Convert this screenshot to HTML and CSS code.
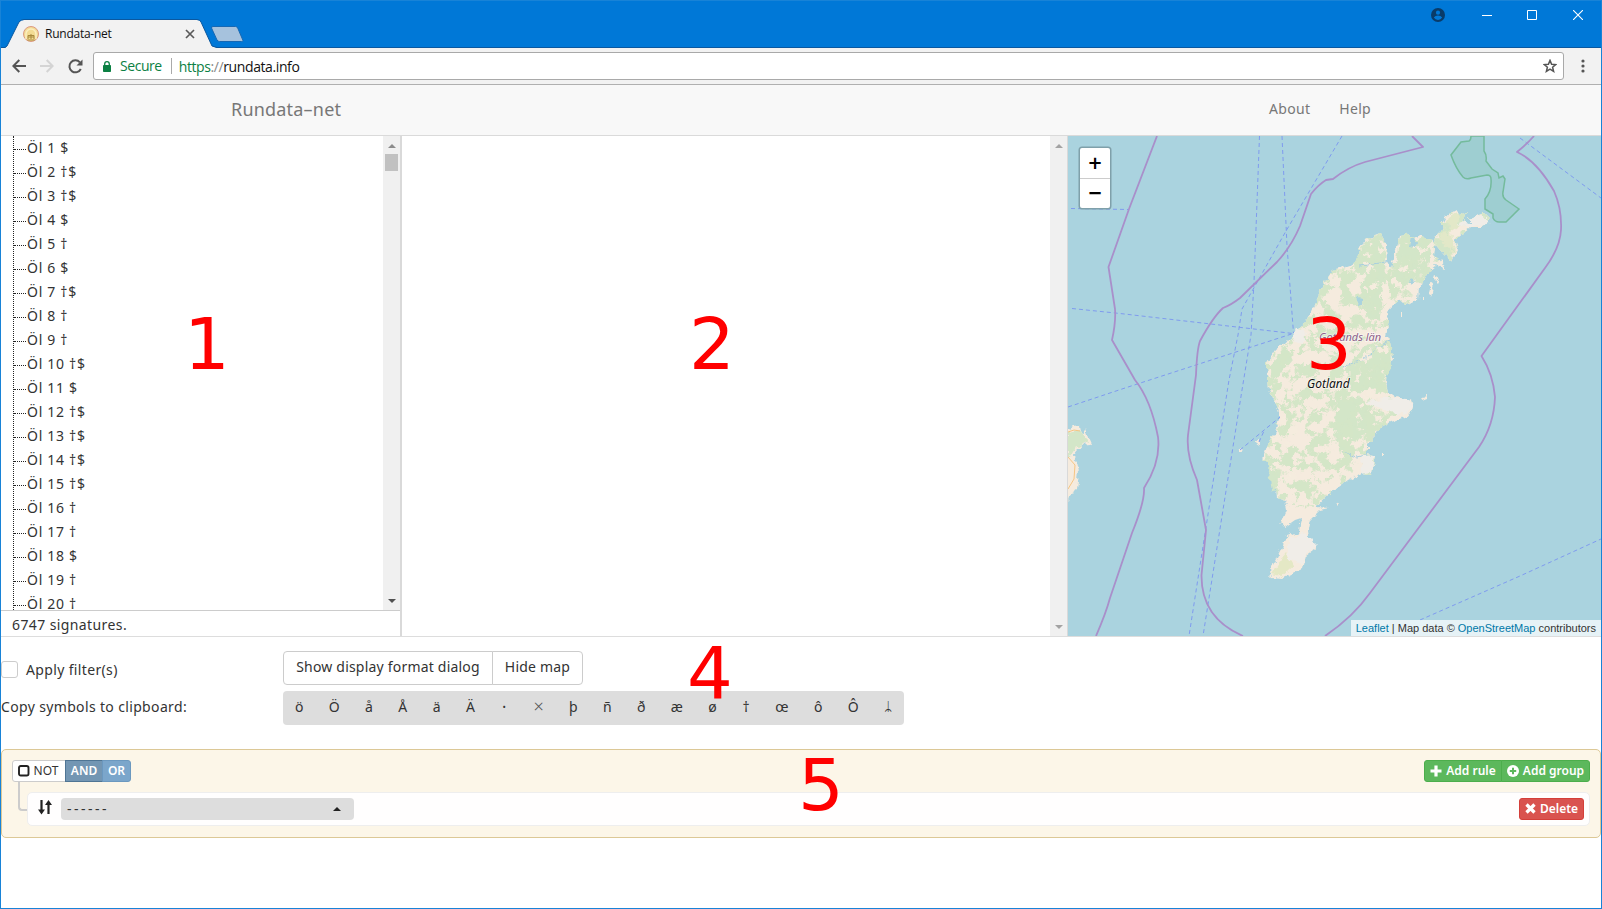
FILE: index.html
```html
<!DOCTYPE html>
<html lang="en">
<head>
<meta charset="utf-8">
<title>Rundata-net</title>
<link rel="stylesheet" href="styles.css">
</head>
<body>
<div class="window">
  <header class="titlebar">
    <div class="tab">
      <svg class="tab-shape" width="212" height="29" viewBox="0 0 212 29"><path d="M0 29 L2 27 L14 3 Q16 1 19 1 H192 Q195 1 196 3 L207 27 L212 29Z" fill="#f2f2f2"/><path d="M0 28.500 L2 27 L14 3 Q16 .5 19 .5 H192 Q195 .5 196 3 L207 27 L212 28.500" fill="none" stroke="#0a58a0" stroke-width="1"/></svg>
      <svg class="favicon" width="16" height="16" viewBox="0 0 16 16"><circle cx="8" cy="8" r="7.500" fill="#f3dc94" stroke="#dc9a82"/><path d="M3 13V8a5 5 0 0 1 10 0v5" fill="none" stroke="#fbeec0" stroke-width="1.500"/><path d="M5 13V9.500h6V13M5 11h6M8 8v5M4.500 14h7" fill="none" stroke="#a8893c"/></svg>
      <span class="tab-title">Rundata-net</span>
      <svg class="tab-close" width="10" height="10" viewBox="0 0 10 10"><path d="M1 1l8 8M9 1l-8 8" stroke="#5a5a5a" stroke-width="1.700"/></svg>
    </div>
    <svg class="newtab" width="34" height="17" viewBox="0 0 34 17"><path d="M3 .5H25.500Q27 .5 27.700 2L33 14.500Q33 15.500 31.500 15.500H9.500Q8 15.500 7 14L1.500 2Q1.300 .5 3 .5Z" fill="#a6c2dd" stroke="#1768b3"/></svg>
    <div class="winbuttons">
      <svg width="14" height="14" viewBox="0 0 14 14"><circle cx="7" cy="7" r="7" fill="#093b69"/><circle cx="7" cy="4.700" r="2.100" fill="#0078d7"/><path d="M2.800 9.600q1.500-2 4.200-2t4.200 2q-1.500 2.400-4.200 2.400t-4.200-2.400z" fill="#0078d7"/></svg>
      <svg width="10" height="10" viewBox="0 0 10 10"><path d="M0 5.500h10" stroke="#fff"/></svg>
      <svg width="10" height="10" viewBox="0 0 10 10"><path d="M.5.5h9v9h-9z" fill="none" stroke="#fff"/></svg>
      <svg width="10" height="10" viewBox="0 0 10 10"><path d="M0 0l10 10M10 0L0 10" stroke="#fff" stroke-width="1.100"/></svg>
    </div>
  </header>

  <div class="toolbar">
    <svg width="14" height="14" viewBox="0 0 14 14"><path d="M14 7H1.500M7.300 1L1.300 7l6 6" fill="none" stroke="#555" stroke-width="2"/></svg>
    <svg width="14" height="14" viewBox="0 0 14 14"><path d="M0 7h12.500M6.700 1l6 6-6 6" fill="none" stroke="#d4d4d4" stroke-width="2"/></svg>
    <svg width="15" height="15" viewBox="0 0 15 15"><path d="M12.800 10A6 6 0 1 1 11.900 3.300" fill="none" stroke="#555" stroke-width="2"/><path d="M14.500 .5v6h-6z" fill="#555"/></svg>
    <div class="omnibox">
      <svg width="8" height="11" viewBox="0 0 8 11"><rect y="4" width="8" height="7" rx=".8" fill="#0b8043"/><path d="M1.700 5V3a2.300 2.300 0 0 1 4.600 0v2" fill="none" stroke="#0b8043" stroke-width="1.300"/></svg>
      <span class="secure">Secure</span>
      <span class="url"><span class="scheme">https</span><span class="slashes">://</span>rundata.info</span>
      <svg class="star" width="14" height="14" viewBox="0 0 14 14"><path d="M7 1.400l1.600 3.900 4.200.3-3.200 2.700 1 4.100L7 10.200l-3.600 2.200 1-4.100L1.200 5.600l4.200-.3z" fill="none" stroke="#555" stroke-width="1.500"/></svg>
    </div>
    <svg class="dots" width="4" height="14" viewBox="0 0 4 14"><g fill="#555"><circle cx="2" cy="2" r="1.600"/><circle cx="2" cy="7" r="1.600"/><circle cx="2" cy="12" r="1.600"/></g></svg>
  </div>

  <nav class="navbar">
    <a class="brand">Rundata–net</a>
    <a class="nav-link">About</a>
    <a class="nav-link">Help</a>
  </nav>

  <main class="panels">
    <section class="signatures">
      <div class="tree-area">
        <ul class="tree">
          <li>Öl 1 $</li><li>Öl 2 †$</li><li>Öl 3 †$</li><li>Öl 4 $</li><li>Öl 5 †</li>
          <li>Öl 6 $</li><li>Öl 7 †$</li><li>Öl 8 †</li><li>Öl 9 †</li><li>Öl 10 †$</li>
          <li>Öl 11 $</li><li>Öl 12 †$</li><li>Öl 13 †$</li><li>Öl 14 †$</li><li>Öl 15 †$</li>
          <li>Öl 16 †</li><li>Öl 17 †</li><li>Öl 18 $</li><li>Öl 19 †</li><li>Öl 20 †</li>
        </ul>
        <div class="scrollbar">
          <svg width="8" height="4" viewBox="0 0 8 4"><path d="M0 4L4 0l4 4z" fill="#8b8b8b"/></svg>
          <div class="thumb"></div>
          <svg class="down" width="8" height="4" viewBox="0 0 8 4"><path d="M0 0h8L4 4z" fill="#505050"/></svg>
        </div>
      </div>
      <div class="count">6747 signatures.</div>
    </section>
    <section class="details">
      <div class="scrollbar">
        <svg width="8" height="4" viewBox="0 0 8 4"><path d="M0 4L4 0l4 4z" fill="#a3a3a3"/></svg>
        <svg class="down" width="8" height="4" viewBox="0 0 8 4"><path d="M0 0h8L4 4z" fill="#a3a3a3"/></svg>
      </div>
    </section>
    <section class="map">
      <svg class="map-art" width="533" height="500" viewBox="1068 136 533 500">
        <defs>
          <filter id="coast" x="-5%" y="-5%" width="110%" height="110%" color-interpolation-filters="sRGB">
            <feTurbulence type="fractalNoise" baseFrequency=".16" numOctaves="3" seed="4" result="n"/>
            <feDisplacementMap in="SourceGraphic" in2="n" scale="7" xChannelSelector="R" yChannelSelector="G"/>
          </filter>
          <filter id="woods" filterUnits="userSpaceOnUse" x="1068" y="136" width="533" height="500" color-interpolation-filters="sRGB">
            <feTurbulence type="fractalNoise" baseFrequency=".085" numOctaves="4" seed="11"/>
            <feColorMatrix values="0 0 0 0 .83  0 0 0 0 .9  0 0 0 0 .78  14 0 0 0 -6.900" result="g"/>
            <feComposite in="g" in2="SourceGraphic" operator="in"/>
          </filter>
          <filter id="fields" filterUnits="userSpaceOnUse" x="1068" y="136" width="533" height="500" color-interpolation-filters="sRGB">
            <feTurbulence type="fractalNoise" baseFrequency=".11" numOctaves="3" seed="29"/>
            <feColorMatrix values="0 0 0 0 .96  0 0 0 0 .925  0 0 0 0 .87  14 0 0 0 -8.300" result="g"/>
            <feComposite in="g" in2="SourceGraphic" operator="in"/>
          </filter>
        </defs>
        <rect x="1068" y="136" width="533" height="500" fill="#aad3df"/>
        <g filter="url(#coast)">
          <g fill="#f5ebde">
            <path d="M1491 220L1484 213 1470 218 1463 220 1468 211 1459 216 1457 210 1446 216 1442 224 1443 230 1436 236 1433 244 1430 240 1420 236 1412 238 1410 234 1400 236 1398 244 1394 258 1391 268 1387 262 1386 245 1380 234 1367 239 1360 248 1358 262 1343 267 1332 270 1325 280 1318 296 1308 318 1296 333 1287 341 1275 350 1266 364 1268 390 1274 402 1279 415 1277 430 1268 444 1263 459 1272 465 1274 478 1276 498 1285 500 1287 510 1281 525 1285 527 1295 520 1301 518 1299 532 1285 538 1282 548 1269 574 1272 577 1282 578 1303 568 1306 556 1318 547 1310 542 1308 530 1310 520 1320 510 1329 508 1316 507 1325 497 1335 490 1348 480 1363 473 1371 475 1375 457 1368 455 1368 443 1376 435 1380 428 1392 422 1407 417 1414 408 1411 400 1395 397 1388 392 1386 382 1387 370 1393 358 1390 342 1386 335 1389 320 1387 312 1393 305 1398 300 1409 305 1418 300 1419 288 1430 270 1436 265 1445 270 1443 262 1434 255 1436 244 1444 254 1452 261 1458 248 1455 240 1470 228 1480 228Z"/>
            <path d="M1062 433l11-7 7-1 1 6 3 5 1-8 2 7 4 9-9 1-8 10 2 8 2 9-2 18-6 4-3 10-6 4z"/>
            <path d="M1239 450l3-1 1 4h-4zM1256 441l3-1 1 4-3 1zM1434 275l5 3-2 4-4-4zM1431 284l3 1-3 12-2-5zM1422 297h2v3h-2zM1421 397l6-1v3l-5 2zM1382 453h3v2h-3zM1336 504l3-2-1 4zM1401 312h2v3h-2z"/>
          </g>
          <g fill="#d3e6c8">
            <path d="M1366 242l13-6 6 18 1 28-7 40-12-5-8-35-6-18zM1400 240l21 0 10 10-4 22-14 8-16 14-6-12 7-26zM1336 400l24-6 8 18 15 10-20 14-22 16-8-20zM1364 346l26-4 1 26-10 20-28 6-8-24zM1270 366l16-20 6 14-18 20zM1266 455l14 3-2 36-6-4zM1068 432l12 -2 8 12-12 6-8 10z"/>
            <path d="M1446 220l10-7 8 10-14 10 6 16-6 8-14-14z" fill="#e2e8c8"/>
            <path d="M1270 574l16-20 8 12-12 10z" fill="#e4e8c5"/>
          </g>
          <path d="M1491 220L1484 213 1470 218 1463 220 1468 211 1459 216 1457 210 1446 216 1442 224 1443 230 1436 236 1433 244 1430 240 1420 236 1412 238 1410 234 1400 236 1398 244 1394 258 1391 268 1387 262 1386 245 1380 234 1367 239 1360 248 1358 262 1343 267 1332 270 1325 280 1318 296 1308 318 1296 333 1287 341 1275 350 1266 364 1268 390 1274 402 1279 415 1277 430 1268 444 1263 459 1272 465 1274 478 1276 498 1285 500 1287 510 1300 506 1316 507 1325 497 1335 490 1348 480 1363 473 1371 475 1375 457 1368 455 1368 443 1376 435 1380 428 1392 422 1400 410 1388 392 1386 382 1387 370 1393 358 1390 342 1386 335 1389 320 1387 312 1393 305 1398 300 1409 305 1418 300 1419 288 1430 270 1443 262 1434 255 1436 244 1444 254 1452 261 1458 248 1455 240 1470 228Z" filter="url(#woods)"/>
          <path d="M1360 244l70 -6v30l-40 36v90l-14 30-50 30v-60l20-50z M1266 360h30v140h-30z" clip-path="url(#landclip)" filter="url(#fields)"/>
          <clipPath id="landclip"><path d="M1398 244L1394 258 1391 268 1387 262 1386 245 1380 236 1367 241 1360 262 1340 300 1340 400 1280 400 1279 415 1277 430 1268 444 1268 459 1276 490 1300 480 1368 443 1376 435 1385 405 1386 370 1390 358 1386 335 1389 320 1387 312 1393 303 1409 300 1419 288 1430 262 1425 240Z"/></clipPath>
          <path d="M1474 216l12 1 4 6-20 5-12-4zM1386 398l22 1 6 8-10 8-24-6-14-8 18-2zM1288 540l16-8 14 14-12 8-4 10-14-6zM1296 328l10 4-4 12-10-3zM1362 455l12 1-2 16-12 2z" fill="#f0ede8"/>
          <path d="M1412 238l6 4-2 6-6-2zM1410 278l6 2-3 5-5-2zM1358 298l5 1v6l-6-1zM1436 248l5 3 2 6-6-1zM1466 219l4 0 0 5-4-1z" fill="#aad3df"/>
          <path d="M1343 366l20-6 18-14 10-6M1344 452l12 5 16-3M1360 266l20-3 10-2" fill="none" stroke="#a9cfdf"/>
        </g>
        <path d="M1068 432l6-2 6 1M1068 457l7 8-1 14-6 10" fill="none" stroke="#f5c583"/>
        <path d="M1471 136q0 4-2 5l-8 1-10 13q5 14 12 22 3 3 8 1l16-3q4 0 4 4 1 12-6 20v10l8 5 0 4q2 4 6 4h7l13-13-13-9q-4-3-3-8l2-13-2-3-4 2-1-5-6-4-6-8q1-6-2-10v-15z" fill="#8cc8bb" fill-opacity=".4" stroke="#74bb9c" stroke-width="1.500"/>
        <g fill="none" stroke="#7f9bef" stroke-width="1" stroke-dasharray="4 3">
          <path d="M1259.500 136L1254 282 1251 335 1242 390 1203 636M1282 136L1287 246 1293.500 333M1342 136L1286 231 1264 270 1242 309 1238 335 1229 380 1189 636M1072 308.500L1120 313.500 1293 333.500 1125 388 1068 407M1071 208.500L1129 209.500M1520 138L1601 198M1420 620L1520 576 1601 539M1240 450L1280 417M1259 442L1264 431"/>
        </g>
        <g fill="none" stroke="#a98fca" stroke-width="1.800" stroke-linejoin="round">
          <path d="M1157 136L1129 209 1108.500 267 1115 309Q1116 322 1112 340L1135 380Q1151 400 1158 437Q1161 462 1144 488Q1145 501 1132 533L1110 598Q1106 613 1096 636"/>
          <path d="M1412 136L1423 147 1365 162Q1348 167 1333 179L1326 180Q1318 185 1311 194L1300 226Q1291 247 1277 262L1240 298Q1231 305 1223 308Q1213 317 1200 341Q1197 349 1196 375L1188 435Q1186 455 1197 480L1206 530 1201.500 575Q1201 618 1243 636"/>
          <path d="M1534 136Q1528 143 1517 152Q1537 161 1554 191Q1562 209 1561 230Q1560 248 1545 268L1481.500 356Q1493 374 1495 397Q1494 425 1479 447L1370 593Q1353 617 1325 636"/>
        </g>
        <text class="region-label" x="1319" y="341">Gotlands län</text>
        <text class="island-label" x="1307" y="388">Gotland</text>
      </svg>
      <div class="zoom"><a>+</a><a>−</a></div>
      <div class="attribution"><a>Leaflet</a> | Map data © <a>OpenStreetMap</a> contributors</div>
    </section>
  </main>

  <section class="controls">
    <label class="filter"><span class="checkbox"></span>Apply filter(s)</label>
    <div class="btn-group"><button>Show display format dialog</button><button>Hide map</button></div>
    <span class="copy-label">Copy symbols to clipboard:</span>
    <div class="symbols"><span>ö</span><span>Ö</span><span>å</span><span>Å</span><span>ä</span><span>Ä</span><span class="dot">•</span><span class="times">×</span><span>þ</span><span>ñ</span><span>ð</span><span>æ</span><span>ø</span><span>†</span><span>œ</span><span>ô</span><span>Ô</span><span>ᛦ</span></div>
  </section>

  <section class="builder">
    <div class="group-head">
      <div class="conditions">
        <span class="not"><svg width="12" height="12" viewBox="0 0 12 12"><rect x="1" y="1" width="9.500" height="9.500" rx="1.800" fill="none" stroke="#222" stroke-width="1.900"/></svg>NOT</span><span class="and">AND</span><span class="or">OR</span>
      </div>
      <div class="adders">
        <span class="add-rule"><svg width="12" height="12" viewBox="0 0 12 12"><path d="M6 .5v11M.5 6h11" stroke="#fff" stroke-width="3.200"/></svg>Add rule</span><span class="add-group"><svg width="12" height="12" viewBox="0 0 12 12"><circle cx="6" cy="6" r="6" fill="#fff"/><path d="M6 2.800v6.400M2.800 6h6.400" stroke="#5cb85c" stroke-width="2"/></svg>Add group</span>
      </div>
    </div>
    <div class="rule-row">
      <div class="elbow"></div>
      <div class="rule">
        <svg class="sort" width="14" height="15" viewBox="0 0 14 15"><path d="M3.500 0v11M10.500 14V4" stroke="#222" stroke-width="2.200"/><path d="M0 9.500h7l-3.500 5zM7 5h7L10.500.0z" fill="#222"/></svg>
        <div class="select"><span>------</span><svg width="8" height="4" viewBox="0 0 8 4"><path d="M0 4L4 0l4 4z" fill="#222"/></svg></div>
        <span class="delete"><svg width="11" height="11" viewBox="0 0 11 11"><path d="M1.500 1.500l8 8M9.500 1.500l-8 8" stroke="#fff" stroke-width="3.300"/></svg>Delete</span>
      </div>
    </div>
  </section>

  <span class="mark m1">1</span>
  <span class="mark m2">2</span>
  <span class="mark m3">3</span>
  <span class="mark m4">4</span>
  <span class="mark m5">5</span>
</div>
</body>
</html>
```
FILE: styles.css
```css
* { box-sizing: border-box; }
html, body { margin: 0; height: 909px; overflow: hidden; }
body { background: #fff; color: #333; font: 14px "Noto Sans", "Open Sans", sans-serif; }
svg { display: block; flex: none; }
.window { position: relative; width: 1602px; height: 909px; display: flex; flex-direction: column; border: 1px solid #1883d7; border-top: 0; }

.titlebar { height: 48px; flex: none; display: flex; align-items: flex-end; background: #0078d7; border-top: 1px solid #1883d7; border-bottom: 1px solid #0a58a0; padding-left: 5px; }
.tab { position: relative; width: 208px; height: 28px; display: flex; align-items: center; padding: 1px 0 0 17px; }
.tab-shape { position: absolute; left: -1px; top: 0; }
.favicon { position: relative; }
.tab-title { position: relative; margin-left: 6px; font: 12px "Open Sans", sans-serif; letter-spacing: -.25px; color: #111; flex: 1; }
.tab-close { position: relative; margin-right: 19px; }
.newtab { margin: 0 0 4px -4px; }
.winbuttons { margin-left: auto; align-self: flex-start; display: flex; align-items: center; height: 28px; padding-right: 18px; }
.winbuttons svg + svg { margin-left: 37px; }
.winbuttons svg + svg + svg { margin-left: 35px; }
.winbuttons svg + svg + svg + svg { margin-left: 36px; }

.toolbar { height: 37px; flex: none; display: flex; align-items: center; background: #f2f2f2; border-bottom: 1px solid #b0b0b0; padding-left: 11px; }
.toolbar > svg + svg { margin-left: 14px; }
.omnibox { width: 1471px; height: 28px; margin-left: 10px; display: flex; align-items: center; background: #fff; border: 1px solid #a9a9a9; border-radius: 3px; padding: 0 6px 0 9px; font: 14px "Open Sans", sans-serif; color: #111; }
.secure { color: #0b8043; margin-left: 9px; padding-right: 9px; border-right: 1px solid #aaa; line-height: 16px; letter-spacing: -.45px; }
.url { margin-left: 7px; letter-spacing: -.4px; }
.scheme { color: #0b8043; }
.slashes { color: #888; }
.star { margin-left: auto; }
.toolbar > .dots { margin-left: 17px; }

.navbar { height: 51px; flex: none; display: flex; align-items: center; background: #f8f8f8; border-bottom: 1px solid #dadada; padding: 0 230px 3px 230px; color: #777; }
.brand { font-size: 18px; margin-right: auto; letter-spacing: .2px; }
.nav-link { margin-left: 29px; letter-spacing: .3px; }

.panels { height: 501px; flex: none; display: flex; border-bottom: 1px solid #ddd; }
.signatures { width: 401px; display: flex; flex-direction: column; border-right: 2px solid #d9d9d9; }
.tree-area { height: 474px; flex: none; display: flex; overflow: hidden; }
.tree { flex: 1; list-style: none; margin: 0 0 0 12px; padding: 0; border-left: 1px dotted #222; letter-spacing: .7px; }
.tree li { height: 24px; line-height: 24px; display: flex; align-items: center; }
.tree li::before { content: ""; width: 12px; margin-right: 1px; border-top: 1px dotted #222; position: relative; top: 1px; }
.scrollbar { width: 17px; background: #f0f0f0; display: flex; flex-direction: column; align-items: center; padding: 8px 0 7px; }
.thumb { width: 13px; height: 17px; margin-top: 6px; background: #c1c1c1; }
.down { margin-top: auto; }
.count { flex: 1; border-top: 1px solid #ccc; padding-left: 11px; line-height: 27px; letter-spacing: .4px; }
.details { flex: 1; display: flex; justify-content: flex-end; border-right: 1px solid #d9d9d9; }
.map { position: relative; width: 533px; overflow: hidden; }
.region-label { font: italic 11px "Noto Sans", sans-serif; fill: #8d618b; stroke: #fff; stroke-opacity: .6; stroke-width: 1.500px; paint-order: stroke; }
.island-label { font: italic 12px "Noto Sans", sans-serif; fill: #111; stroke: #fff; stroke-opacity: .6; stroke-width: 1.500px; paint-order: stroke; }
.zoom { position: absolute; left: 12px; top: 12px; width: 30px; height: 60px; background: #fff; border-radius: 2px; box-shadow: 0 0 0 1.500px #7fa0aa; display: flex; flex-direction: column; }
.zoom a { height: 30px; text-align: center; font: bold 18px/30px "DejaVu Sans", sans-serif; color: #000; }
.zoom a + a { border-top: 1px solid #ccc; line-height: 28px; }
.attribution { position: absolute; right: 0; bottom: 0; height: 16px; padding: 0 5px; background: rgba(255,255,255,.7); font: 11px/16px "Liberation Sans", Arial, sans-serif; white-space: nowrap; }
.attribution a { color: #0078a8; }

.controls { flex: none; height: 112px; padding-top: 14px; display: grid; grid-template-columns: 282px max-content; grid-template-rows: 34px 34px; row-gap: 6px; }
.filter { display: flex; align-items: center; padding-top: 3px; letter-spacing: .35px; }
.checkbox { width: 17px; height: 17px; margin-right: 8px; border: 1px solid #ccc; border-radius: 3px; }
.btn-group { display: flex; }
.btn-group button { height: 34px; padding: 0 0 4px; width: 210px; background: #fff; border: 1px solid #ccc; border-radius: 4px 0 0 4px; font: inherit; color: #333; letter-spacing: .2px; }
.btn-group button + button { width: 91px; margin-left: -1px; border-radius: 0 4px 4px 0; }
.copy-label { line-height: 32px; letter-spacing: .35px; }
.symbols { width: 621px; height: 34px; display: flex; justify-content: space-between; background: #ddd; border-radius: 4px; padding: 0 12px; line-height: 31px; }
.symbols span { min-width: 8px; text-align: center; }
.symbols .dot { font-size: 9px; }
.symbols .times { font-size: 18px; font-weight: 300; color: #555; }

.builder { flex: none; height: 89px; border: 1px solid #dcc896; border-radius: 5px; background: #fcf6e8; padding: 10px; }
.group-head { display: flex; justify-content: space-between; height: 22px; font-size: 12px; }
.conditions, .adders { display: flex; }
.conditions span, .adders span, .delete { height: 22px; display: flex; align-items: center; justify-content: center; border: 1px solid; white-space: nowrap; padding-bottom: 1px; }
.conditions .not { width: 54px; gap: 4px; background: #fff; border-color: #ccc; border-radius: 3px 0 0 3px; padding-right: 2px; }
.conditions .and { width: 38px; margin-left: -1px; background: #7396b3; border-color: #4f7594; color: #fff; font-weight: 600; }
.conditions .or { width: 29px; margin-left: -1px; background: #7ba6cb; border-color: #6b98bf; color: #fff; font-weight: 600; border-radius: 0 3px 3px 0; }
.adders span, .delete { background: #5cb85c; border-color: #4cae4c; color: #fff; gap: 4px; font-weight: 600; font-size: 12px; }
.adders .add-rule { width: 78px; border-radius: 3px 0 0 3px; }
.adders .add-group { width: 89px; margin-left: -1px; border-radius: 0 3px 3px 0; }
.rule-row { display: flex; height: 44px; }
.elbow { width: 9px; height: 29px; margin-left: 6px; border: solid #ccc; border-width: 0 0 2px 2px; border-bottom-left-radius: 4px; }
.rule { flex: 1; height: 34px; margin-top: 10px; display: flex; align-items: center; background: #fffefe; border: 1px solid #eee; border-radius: 5px; padding: 0 5px 0 10px; }
.sort { margin-top: -4px; }
.select { width: 293px; height: 22px; margin-left: 9px; display: flex; align-items: center; justify-content: space-between; background: #ddd; border-radius: 4px; padding: 0 13px 0 6px; letter-spacing: 2.500px; }
.select span { margin-top: -2px; }
.delete { width: 65px; margin-left: auto; background: #d9534f; border-color: #d43f3a; border-radius: 3px; }

.mark { position: absolute; font: 72px/72px "DejaVu Sans", sans-serif; color: #f00; }
.m1 { left: 183px; top: 308px; }
.m2 { left: 688px; top: 308px; }
.m3 { left: 1305px; top: 308px; }
.m4 { left: 686px; top: 637px; }
.m5 { left: 797px; top: 749px; }
```
